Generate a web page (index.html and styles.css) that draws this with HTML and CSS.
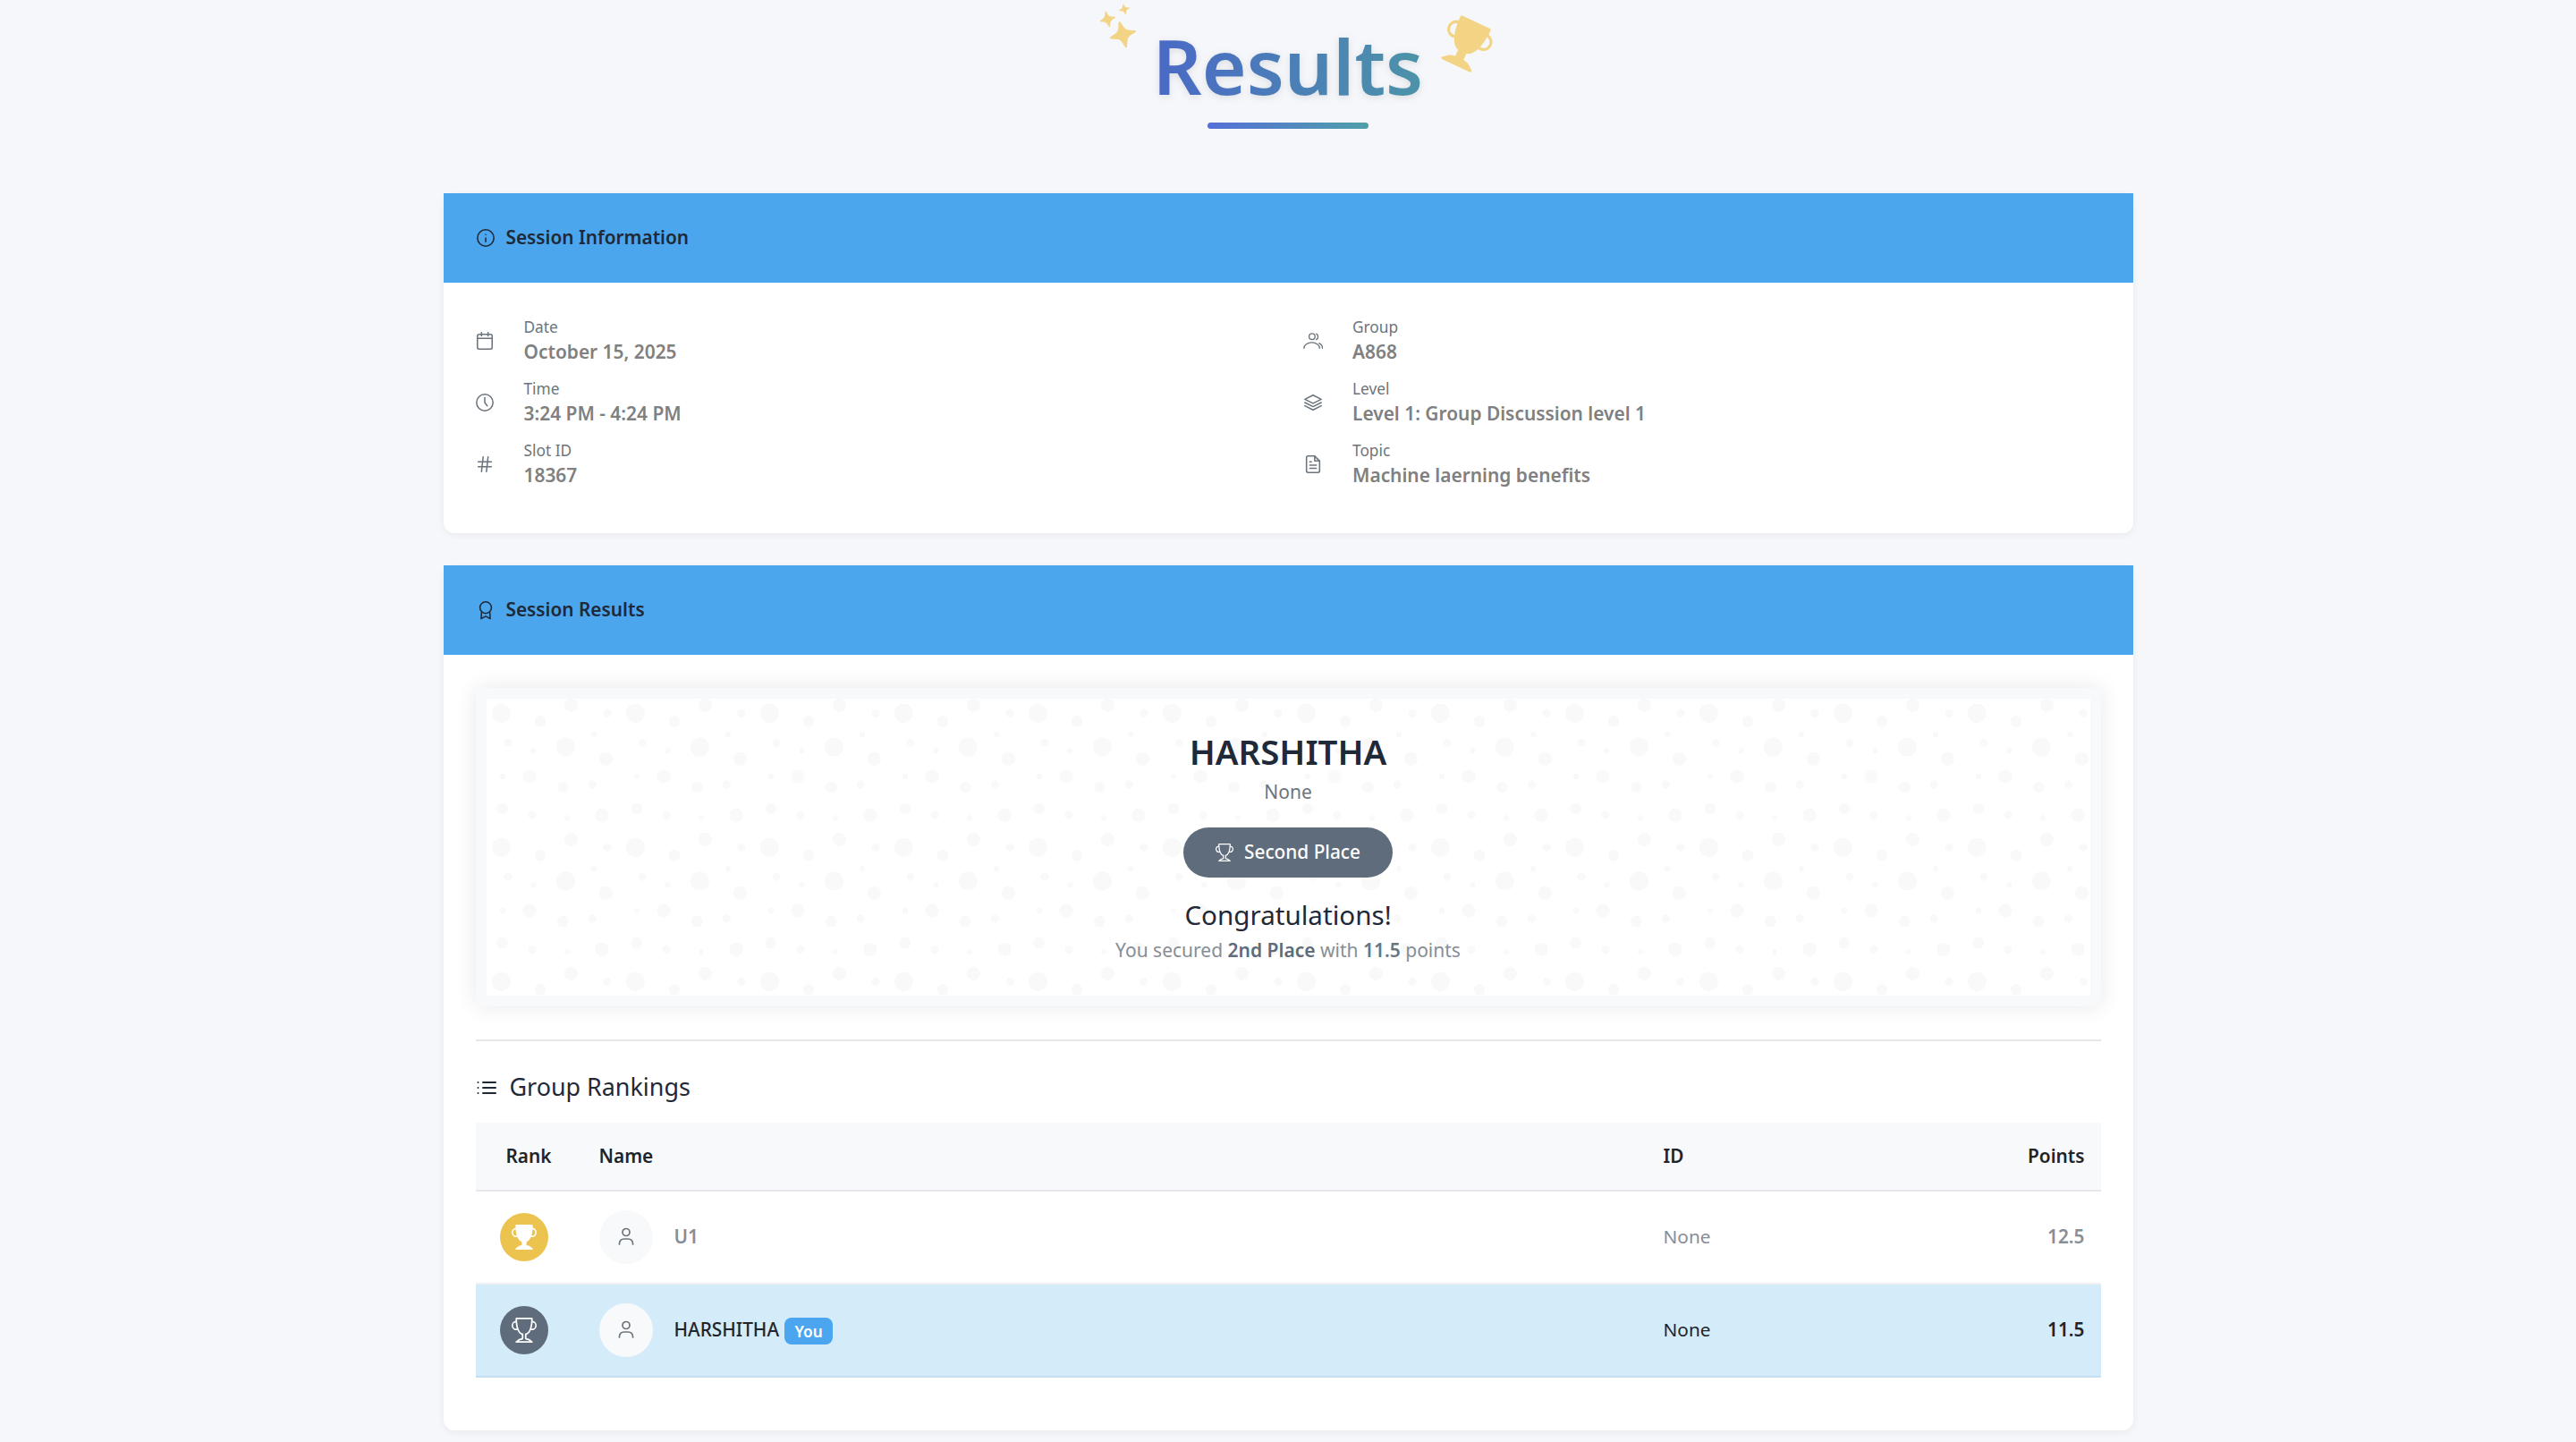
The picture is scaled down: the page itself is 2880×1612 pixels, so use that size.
FILE: index.html
```html
<!DOCTYPE html>
<html lang="en">
<head>
<meta charset="utf-8">
<title>Results</title>
<link rel="stylesheet" href="styles.css">
</head>
<body>
<main class="page">
  <header class="hero">
    <div class="title-wrap">
      <svg class="deco deco-stars" viewBox="0 0 16 16"><path d="M7.657 6.247c.11-.33.576-.33.686 0l.645 1.937a2.89 2.89 0 0 0 1.829 1.828l1.936.645c.33.11.33.576 0 .686l-1.937.645a2.89 2.89 0 0 0-1.828 1.829l-.645 1.936a.361.361 0 0 1-.686 0l-.645-1.937a2.89 2.89 0 0 0-1.828-1.828l-1.937-.645a.361.361 0 0 1 0-.686l1.937-.645a2.89 2.89 0 0 0 1.828-1.828zM3.794 1.148a.217.217 0 0 1 .412 0l.387 1.162c.173.518.579.924 1.097 1.097l1.162.387a.217.217 0 0 1 0 .412l-1.162.387A1.73 1.73 0 0 0 4.593 5.69l-.387 1.162a.217.217 0 0 1-.412 0L3.407 5.69A1.73 1.73 0 0 0 2.31 4.593l-1.162-.387a.217.217 0 0 1 0-.412l1.162-.387A1.73 1.73 0 0 0 3.407 2.31zM10.863.099a.145.145 0 0 1 .274 0l.258.774c.115.346.386.617.732.732l.774.258a.145.145 0 0 1 0 .274l-.774.258a1.16 1.16 0 0 0-.732.732l-.258.774a.145.145 0 0 1-.274 0l-.258-.774a1.16 1.16 0 0 0-.732-.732L9.1 2.137a.145.145 0 0 1 0-.274l.774-.258c.346-.115.617-.386.732-.732z"/></svg>
      <h1 class="title">Results</h1>
      <svg class="deco deco-trophy" viewBox="0 0 16 16"><path d="M2.5.5A.5.5 0 0 1 3 0h10a.5.5 0 0 1 .5.5q0 .807-.034 1.536a3 3 0 1 1-1.133 5.89c-.79 1.865-1.878 2.777-2.833 3.011v2.173l1.425.356c.194.048.377.135.537.255L13.3 15.1a.5.5 0 0 1-.3.9H3a.5.5 0 0 1-.3-.9l1.838-1.379c.16-.12.343-.207.537-.255L6.5 13.11v-2.173c-.955-.234-2.043-1.146-2.833-3.012a3 3 0 1 1-1.132-5.89A33 33 0 0 1 2.5.5m.099 2.54a2 2 0 0 0 .72 3.935c-.333-1.05-.588-2.346-.72-3.935m10.083 3.935a2 2 0 0 0 .72-3.935c-.133 1.59-.388 2.885-.72 3.935"/></svg>
    </div>
    <div class="title-rule"></div>
  </header>

  <section class="card card-info">
    <div class="card-head">
      <svg class="ico head-ico" viewBox="0 0 24 24"><circle cx="12" cy="12" r="10"/><path d="M12 16.500v-4.500M12 8h.01"/></svg>
      <h2 class="card-title">Session Information</h2>
    </div>
    <div class="info-grid">
      <div class="info-col">
        <div class="info-row">
          <svg class="ico info-ico" viewBox="0 0 24 24"><rect x="3" y="4" width="18" height="18" rx="2"/><path d="M16 2v4M8 2v4M3 9h18"/></svg>
          <div><div class="info-label">Date</div><div class="info-value">October 15, 2025</div></div>
        </div>
        <div class="info-row">
          <svg class="ico info-ico" viewBox="0 0 24 24"><circle cx="12" cy="12" r="10"/><path d="M12 6v6l3 4"/></svg>
          <div><div class="info-label">Time</div><div class="info-value">3:24 PM - 4:24 PM</div></div>
        </div>
        <div class="info-row">
          <svg class="ico info-ico" viewBox="0 0 24 24"><path d="M4 9h16M4 15h16M10 3 8 21M16 3l-2 18"/></svg>
          <div><div class="info-label">Slot ID</div><div class="info-value">18367</div></div>
        </div>
      </div>
      <div class="info-col">
        <div class="info-row">
          <svg class="ico info-ico ico-thin" viewBox="0 0 24 24"><circle cx="10.800" cy="6.800" r="3.600"/><path d="M1 21a9.500 7 0 0 1 19 0M16 3.500a4 4 0 0 1 0 7M23.500 21c0-3-1.500-5-4-6"/></svg>
          <div><div class="info-label">Group</div><div class="info-value">A868</div></div>
        </div>
        <div class="info-row">
          <svg class="ico info-ico" viewBox="0 0 24 24"><path d="M12 3 2 8l10 5 10-5-10-5z"/><path d="m2 16 10 5 10-5M2 12l10 5 10-5"/></svg>
          <div><div class="info-label">Level</div><div class="info-value">Level 1: Group Discussion level 1</div></div>
        </div>
        <div class="info-row">
          <svg class="ico info-ico" viewBox="0 0 24 24"><path d="M14 2H6a2 2 0 0 0-2 2v16a2 2 0 0 0 2 2h12a2 2 0 0 0 2-2V8z"/><path d="M14 2v6h6M16 13H8M16 17H8M10 9H8"/></svg>
          <div><div class="info-label">Topic</div><div class="info-value">Machine laerning benefits</div></div>
        </div>
      </div>
    </div>
  </section>

  <section class="card card-results">
    <div class="card-head">
      <svg class="ico head-ico" viewBox="0 0 24 24"><circle cx="12" cy="9" r="7"/><path d="M7 14.500 6.500 22.500l5.500-3 5.500 3L17 14.500"/></svg>
      <h2 class="card-title">Session Results</h2>
    </div>
    <div class="results-body">
      <div class="winner">
        <div class="winner-name">HARSHITHA</div>
        <div class="winner-id">None</div>
        <div class="place-pill">
          <svg class="pill-ico" viewBox="0 0 16 16"><path d="M2.5.5A.5.5 0 0 1 3 0h10a.5.5 0 0 1 .5.5q0 .807-.034 1.536a3 3 0 1 1-1.133 5.89c-.79 1.865-1.878 2.777-2.833 3.011v2.173l1.425.356c.194.048.377.135.537.255L13.3 15.1a.5.5 0 0 1-.3.9H3a.5.5 0 0 1-.3-.9l1.838-1.379c.16-.12.343-.207.537-.255L6.5 13.11v-2.173c-.955-.234-2.043-1.146-2.833-3.012a3 3 0 1 1-1.132-5.89A33 33 0 0 1 2.5.5m.099 2.54a2 2 0 0 0 .72 3.935c-.333-1.05-.588-2.346-.72-3.935m10.083 3.935a2 2 0 0 0 .72-3.935c-.133 1.59-.388 2.885-.72 3.935M3.504 1q.01.775.056 1.469c.13 2.028.457 3.546.87 4.667C5.294 9.48 6.484 10 7 10a.5.5 0 0 1 .5.5v2.61a1 1 0 0 1-.757.97l-1.426.356a.5.5 0 0 0-.179.085L4.5 15h7l-.638-.479a.5.5 0 0 0-.18-.085l-1.425-.356a1 1 0 0 1-.757-.97V10.5A.5.5 0 0 1 9 10c.516 0 1.706-.52 2.57-2.864.413-1.12.74-2.64.87-4.667q.045-.694.056-1.469z"/></svg>
          <span class="pill-text">Second Place</span>
        </div>
        <div class="congrats">Congratulations!</div>
        <p class="secured">You secured <strong class="s-place">2nd Place</strong> with <strong class="s-points">11.5</strong> points</p>
      </div>

      <hr class="divider">

      <h3 class="rank-title">
        <svg class="ico rank-ico" viewBox="0 0 24 24"><path d="M8 6h14M8 12h14M8 18h14M2.500 6h.01M2.500 12h.01M2.500 18h.01"/></svg>
        <span class="rank-text">Group Rankings</span>
      </h3>

      <table class="rank-table">
        <colgroup><col class="c-rank"><col class="c-name"><col class="c-id"><col class="c-points"></colgroup>
        <thead>
          <tr><th class="th-rank">Rank</th><th>Name</th><th>ID</th><th class="num">Points</th></tr>
        </thead>
        <tbody>
          <tr>
            <td class="cell-medal"><span class="medal medal-gold"><svg class="medal-ico" viewBox="0 0 16 16"><path d="M2.5.5A.5.5 0 0 1 3 0h10a.5.5 0 0 1 .5.5q0 .807-.034 1.536a3 3 0 1 1-1.133 5.89c-.79 1.865-1.878 2.777-2.833 3.011v2.173l1.425.356c.194.048.377.135.537.255L13.3 15.1a.5.5 0 0 1-.3.9H3a.5.5 0 0 1-.3-.9l1.838-1.379c.16-.12.343-.207.537-.255L6.5 13.11v-2.173c-.955-.234-2.043-1.146-2.833-3.012a3 3 0 1 1-1.132-5.89A33 33 0 0 1 2.5.5m.099 2.54a2 2 0 0 0 .72 3.935c-.333-1.05-.588-2.346-.72-3.935m10.083 3.935a2 2 0 0 0 .72-3.935c-.133 1.59-.388 2.885-.72 3.935"/></svg></span></td>
            <td class="cell-person"><div class="person"><span class="avatar"><svg class="ico avatar-ico" viewBox="0 0 24 24"><circle cx="12" cy="6.500" r="4"/><path d="M4.500 20v-1a5 5 0 0 1 5-5h5a5 5 0 0 1 5 5v1"/></svg></span><span class="person-name">U1</span></div></td>
            <td class="cell-text">None</td>
            <td class="cell-text num points">12.5</td>
          </tr>
          <tr class="me">
            <td class="cell-medal"><span class="medal medal-silver"><svg class="medal-ico" viewBox="0 0 16 16"><path d="M2.5.5A.5.5 0 0 1 3 0h10a.5.5 0 0 1 .5.5q0 .807-.034 1.536a3 3 0 1 1-1.133 5.89c-.79 1.865-1.878 2.777-2.833 3.011v2.173l1.425.356c.194.048.377.135.537.255L13.3 15.1a.5.5 0 0 1-.3.9H3a.5.5 0 0 1-.3-.9l1.838-1.379c.16-.12.343-.207.537-.255L6.5 13.11v-2.173c-.955-.234-2.043-1.146-2.833-3.012a3 3 0 1 1-1.132-5.89A33 33 0 0 1 2.5.5m.099 2.54a2 2 0 0 0 .72 3.935c-.333-1.05-.588-2.346-.72-3.935m10.083 3.935a2 2 0 0 0 .72-3.935c-.133 1.59-.388 2.885-.72 3.935M3.504 1q.01.775.056 1.469c.13 2.028.457 3.546.87 4.667C5.294 9.48 6.484 10 7 10a.5.5 0 0 1 .5.5v2.61a1 1 0 0 1-.757.97l-1.426.356a.5.5 0 0 0-.179.085L4.5 15h7l-.638-.479a.5.5 0 0 0-.18-.085l-1.425-.356a1 1 0 0 1-.757-.97V10.5A.5.5 0 0 1 9 10c.516 0 1.706-.52 2.57-2.864.413-1.12.74-2.64.87-4.667q.045-.694.056-1.469z"/></svg></span></td>
            <td class="cell-person"><div class="person"><span class="avatar"><svg class="ico avatar-ico" viewBox="0 0 24 24"><circle cx="12" cy="6.500" r="4"/><path d="M4.500 20v-1a5 5 0 0 1 5-5h5a5 5 0 0 1 5 5v1"/></svg></span><span class="person-name">HARSHITHA</span><span class="you">You</span></div></td>
            <td class="cell-text">None</td>
            <td class="cell-text num points">11.5</td>
          </tr>
        </tbody>
      </table>
    </div>
  </section>
</main>
</body>
</html>
```
FILE: styles.css
```css
* { box-sizing: border-box; }
html, body { margin: 0; padding: 0; }
body {
  background: #f5f7fb;
  font-family: "Noto Sans", "Open Sans", sans-serif;
  color: #212529;
  overflow: hidden;
}
.page { width: 1889px; margin: 0 auto; padding-bottom: 14px; }

.hero { display: flex; flex-direction: column; align-items: center; padding-top: 30px; margin-bottom: 72px; }
.title-wrap { position: relative; }
.title {
  margin: 0;
  font-size: 85.4px;
  line-height: 86px;
  font-weight: 600;
  background: linear-gradient(90deg, #4a69c6, #4c93a8);
  -webkit-background-clip: text;
  background-clip: text;
  color: transparent;
  filter: drop-shadow(0 2px 4px rgba(0,0,0,.1));
}
.deco { position: absolute; fill: #f2d484; }
.deco-stars { width: 48px; height: 48px; left: -60px; top: -24px; transform: rotate(-15deg); }
.deco-trophy { width: 54px; height: 54px; left: 323px; top: -8px; transform: rotate(25deg); }
.title-rule { width: 180px; height: 7px; margin-top: 21px; border-radius: 4px; background: linear-gradient(90deg, #5570d8, #4f9fa9); }

.card { background: #fff; border-radius: 12px; box-shadow: 0 2px 8px rgba(0,0,0,.06); }
.card-info { padding-bottom: 36px; margin-bottom: 36px; }
.card-head { height: 100px; padding: 0 36px; display: flex; align-items: center; background: #4ca6ee; color: #1f2937; }
.card-title { margin: 0; font-size: 20.8px; font-weight: 600; line-height: 30px; padding-bottom: 2px; }
.ico { fill: none; stroke: currentColor; stroke-width: 1.7; stroke-linecap: round; stroke-linejoin: round; flex: none; }
.ico-thin { stroke-width: 1.5; }
.head-ico { width: 22px; height: 22px; margin-right: 12px; }

.info-grid { display: grid; grid-template-columns: 1fr 1fr; column-gap: 36px; padding: 37px 36px 0; }
.info-row { display: flex; align-items: center; gap: 33px; color: #6c757d; margin-bottom: 13px; height: 56px; }
.info-ico { width: 22px; height: 22px; margin-left: -1px; }
.info-label { font-size: 17.3px; line-height: 26px; color: #6c757d; }
.info-value { font-size: 20.9px; line-height: 28px; margin-bottom: 2px; font-weight: 600; color: #808080; }

.results-body { padding: 37px 36px 59px; }
.winner {
  border: 12px solid #f8f9fa;
  box-shadow: 0 0 24px rgba(0,0,0,.09);
  padding: 34px 0 36px;
  display: flex; flex-direction: column; align-items: center;
  background-color: #fff;
  background-size: 150px 150px;
  background-image:
    radial-gradient(circle at 16.3px 16.3px, #f9f9f9 10.3px, transparent 10.8px),
    radial-gradient(circle at 60px 25.3px, #f9f9f9 6px, transparent 6.5px),
    radial-gradient(circle at 94.3px 7.3px, #f9f9f9 7.3px, transparent 7.8px),
    radial-gradient(circle at 135px 16.3px, #f9f9f9 4.3px, transparent 4.8px),
    radial-gradient(circle at 120px 40.3px, #f9f9f9 3px, transparent 3.5px),
    radial-gradient(circle at 24px 49.3px, #f9f9f9 4.3px, transparent 4.8px),
    radial-gradient(circle at 52.3px 58.3px, #f9f9f9 3px, transparent 3.5px),
    radial-gradient(circle at 88.3px 54px, #f9f9f9 10.3px, transparent 10.8px),
    radial-gradient(circle at 133.3px 67.3px, #f9f9f9 7.3px, transparent 7.8px),
    radial-gradient(circle at 18px 87px, #f9f9f9 3px, transparent 3.5px),
    radial-gradient(circle at 48px 87px, #f9f9f9 7.3px, transparent 7.8px),
    radial-gradient(circle at 85.3px 99px, #f9f9f9 6px, transparent 6.5px),
    radial-gradient(circle at 118.3px 96px, #f9f9f9 4.3px, transparent 4.8px),
    radial-gradient(circle at 17.7px 123px, #f9f9f9 6px, transparent 6.5px),
    radial-gradient(circle at 51px 130.3px, #f9f9f9 4.3px, transparent 4.8px),
    radial-gradient(circle at 90px 133.3px, #f9f9f9 3px, transparent 3.5px),
    radial-gradient(circle at 129px 130.3px, #f9f9f9 7.3px, transparent 7.8px);
  background-origin: padding-box;
}
.winner-name { font-size: 38.4px; line-height: 50px; font-weight: 600; color: #1f2937; }
.winner-id { font-size: 21px; line-height: 28px; margin: 6px 0 2px; color: #6c757d; }
.place-pill {
  height: 56px; width: 234px; margin-top: 24px; border-radius: 28px;
  display: flex; align-items: center; justify-content: center; gap: 12px;
  background: #5f6c7b; color: #fff; font-size: 20.8px; font-weight: 500;
}
.pill-ico { width: 20px; height: 20px; fill: currentColor; }
.pill-text { padding-bottom: 2px; }
.congrats { font-size: 29.6px; line-height: 44px; margin-top: 20px; color: #1f2937; }
.secured { margin: 2px 0 0; font-size: 21px; line-height: 30px; color: #868e96; }
.s-place { font-weight: 600; color: #5f6c7b; }
.s-points { font-weight: 600; color: #6c757d; }

.divider { border: 0; height: 2px; background: #e5e7eb; margin: 37px 0 30px; }
.rank-title { margin: 0 0 17px; height: 44px; display: flex; align-items: center; font-size: 26.9px; font-weight: 400; color: #1f2937; }
.rank-ico { width: 24px; height: 24px; margin-right: 14px; stroke-width: 2; }
.rank-text { padding-bottom: 3px; }

.rank-table { width: 100%; table-layout: fixed; border-collapse: collapse; font-size: 20.8px; }
.c-rank { width: 119px; }
.c-name { width: 1190px; }
.c-id { width: 300px; }
.rank-table th { height: 76px; padding: 0 18px 1px 19px; text-align: left; font-weight: 600; color: #212529; background: #f8f9fa; border-bottom: 2px solid #e5e7eb; }
.rank-table .th-rank { text-align: center; padding: 0 0 1px; }
.rank-table td { height: 104px; padding: 0 18px 0 19px; color: #868e96; border-bottom: 2px solid #eef0f2; vertical-align: middle; }
.rank-table .cell-medal { padding: 0 0 0 27px; }
.rank-table .cell-text { padding-bottom: 3px; }
.rank-table .num { text-align: right; }
.points { font-weight: 600; }
.me td { background: #d4ebfa; }
.rank-table .me td { color: #212529; border-bottom-color: #c4dff0; }
.medal { width: 54px; height: 54px; border-radius: 50%; display: flex; align-items: center; justify-content: center; }
.medal-gold { background: #edc34f; }
.medal-silver { background: #5f6c7b; }
.medal-ico { width: 28px; height: 28px; fill: #fff; }
.person { display: flex; align-items: center; }
.avatar { width: 60px; height: 60px; border-radius: 50%; background: #f8f9fa; display: flex; align-items: center; justify-content: center; color: #6c757d; margin-right: 24px; }
.avatar-ico { width: 24px; height: 24px; }
.person-name { font-weight: 600; color: #868e96; padding-bottom: 3px; }
.me .person-name { font-weight: 500; color: #212529; }
.you { margin-left: 6px; height: 30px; width: 54px; border-radius: 8px; background: #4ba5ef; color: #fff; font-size: 17.3px; font-weight: 600; display: flex; align-items: center; justify-content: center; position: relative; top: 1px; }
```
